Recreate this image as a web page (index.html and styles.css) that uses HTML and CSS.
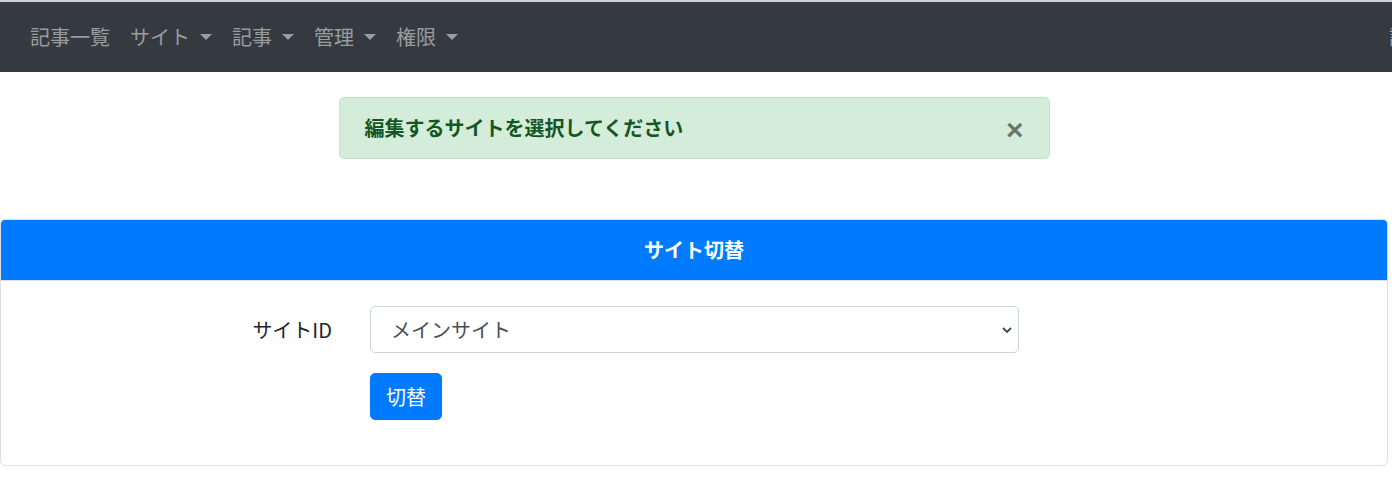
FILE: index.html
```html
<!DOCTYPE html>
<html lang="ja">
<head>
<meta charset="utf-8">
<title>サイト切替</title>
<link rel="stylesheet" href="styles.css">
</head>
<body>
<div class="topline"></div>
<nav class="navbar">
  <ul class="nav">
    <li class="nav-item"><a class="nav-link">記事一覧</a></li>
    <li class="nav-item"><a class="nav-link dropdown">サイト</a></li>
    <li class="nav-item"><a class="nav-link dropdown">記事</a></li>
    <li class="nav-item"><a class="nav-link dropdown">管理</a></li>
    <li class="nav-item"><a class="nav-link dropdown">権限</a></li>
  </ul>
  <div class="nav-right"><a class="nav-link">記事</a></div>
</nav>
<main class="page">
  <div class="alert">
    <span class="alert-text">編集するサイトを選択してください</span>
    <button class="close" type="button">×</button>
  </div>
  <section class="card">
    <div class="card-header">サイト切替</div>
    <div class="card-body">
      <div class="form-row">
        <label class="form-label">サイトID</label>
        <select class="select"><option>メインサイト</option></select>
      </div>
      <div class="form-row">
        <span class="form-label"></span>
        <button class="btn" type="button">切替</button>
      </div>
    </div>
  </section>
</main>
</body>
</html>
```
FILE: styles.css
```css
* { box-sizing: border-box; }
html, body { margin: 0; padding: 0; }
body {
  font-family: "Noto Sans CJK JP", "Noto Sans", sans-serif;
  font-size: 20px;
  line-height: 30px;
  color: #212529;
  background: #fff;
  width: 1392px;
  overflow: hidden;
}
.topline { height: 2px; background: #cfd0d2; }
.navbar {
  display: flex;
  align-items: center;
  height: 70px;
  padding: 10px 20px;
  background: #343a40;
  overflow: hidden;
}
.nav { display: flex; list-style: none; margin: 0; padding: 0; flex: none; }
.nav-link {
  display: block;
  padding: 10px 10px;
  color: rgba(255,255,255,.5);
  white-space: nowrap;
}
.dropdown::after {
  content: "";
  display: inline-block;
  margin-left: 10px;
  vertical-align: 5px;
  border-top: 6px solid rgba(255,255,255,.5);
  border-left: 6px solid transparent;
  border-right: 6px solid transparent;
}
.nav-right { margin-left: auto; margin-right: -67px; flex: none; }
.page { width: 1388px; }
.alert {
  display: flex;
  align-items: center;
  width: 711px;
  height: 62px;
  margin: 25px auto 60px;
  padding: 0 0 0 25px;
  background: #d4edda;
  border: 1px solid #c3e6cb;
  border-radius: 5px;
  color: #155724;
}
.alert-text { flex: 1; font-weight: 700; }
.close {
  border: 0;
  background: transparent;
  padding: 0 25px 0 25px;
  font-family: "Liberation Sans", Arial, sans-serif;
  font-size: 30px;
  font-weight: 700;
  line-height: 30px;
  color: #000;
  opacity: .5;
  margin-top: 4px;
  cursor: pointer;
}
.card {
  border: 1px solid #dfdfdf;
  border-radius: 5px;
  overflow: hidden;
}
.card-header {
  padding: 15px 25px;
  background: #007bff;
  color: #fff;
  font-weight: 700;
  text-align: center;
  border-bottom: 1px solid #dfdfdf;
}
.card-body { padding: 25px 25px 25px; }
.form-row {
  display: flex;
  align-items: center;
  gap: 38px;
  margin-bottom: 20px;
}
.form-row + .form-row { margin-top: 1px; }
.form-label {
  width: 306px;
  text-align: right;
  flex: none;
}
.select {
  appearance: none;
  -webkit-appearance: none;
  width: 649px;
  height: 47px;
  padding: 0 30px 0 20px;
  font-family: inherit;
  font-size: 20px;
  color: #495057;
  background: #fff url("data:image/svg+xml,%3Csvg xmlns='http://www.w3.org/2000/svg' width='10' height='6' viewBox='0 0 10 6'%3E%3Cpath d='M1 1l4 4 4-4' fill='none' stroke='%23404448' stroke-width='1.8'/%3E%3C/svg%3E") no-repeat right 6px center / 10px 6px;
  border: 1px solid #ced4da;
  border-radius: 5px;
}
.btn {
  height: 47px;
  padding: 0 15px;
  font-family: inherit;
  font-size: 20px;
  line-height: 30px;
  color: #fff;
  background: #007bff;
  border: 1px solid #007bff;
  border-radius: 5px;
}
```
